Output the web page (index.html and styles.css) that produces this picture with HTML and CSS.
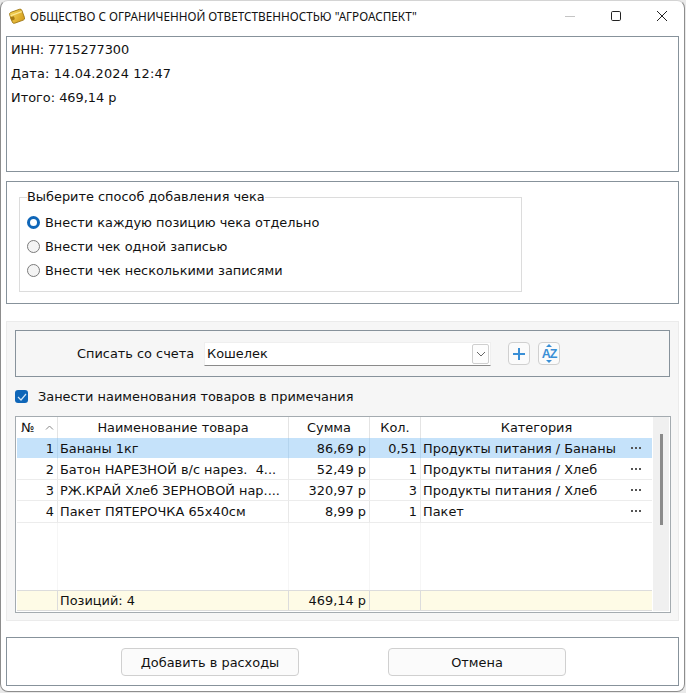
FILE: index.html
```html
<!DOCTYPE html>
<html>
  <head>
    <meta charset="utf-8">
    <title>Чек</title>
    <link rel="stylesheet" href="styles.css">
  </head>
  <body>
    <svg width="0" height="0" class="defs">
      <symbol id="more" viewBox="0 0 10 2">
        <rect x="0" width="2" height="2" fill="#555"/>
        <rect x="4" width="2" height="2" fill="#555"/>
        <rect x="8" width="2" height="2" fill="#555"/>
      </symbol>
    </svg>
    <div class="window">
      <div class="titlebar">
        <svg class="app-icon" width="18" height="18" viewBox="0 0 18 18">
          <defs>
            <linearGradient id="gold" x1="0" y1="0" x2="1" y2="1">
              <stop offset="0" stop-color="#f7d65a"/>
              <stop offset="1" stop-color="#d29a18"/>
            </linearGradient>
          </defs>
          <g transform="rotate(-20 9 9)">
            <rect x="2.5" y="3.5" width="13" height="11.5" rx="2" fill="url(#gold)" stroke="#9c7412" stroke-width="0.8"/>
            <path d="M3 6.5H15" stroke="#fbe997" stroke-width="1.2"/>
            <rect x="2" y="8" width="4" height="3.5" rx="1" fill="#a67a14"/>
          </g>
        </svg>
        <span class="title">ОБЩЕСТВО С ОГРАНИЧЕННОЙ ОТВЕТСТВЕННОСТЬЮ "АГРОАСПЕКТ"</span>
        <div class="controls">
          <span class="ctl">
            <svg width="12" height="12" viewBox="0 0 12 12"><path d="M1 6.5H11" stroke="#c4c4c4" stroke-width="1"/></svg>
          </span>
          <span class="ctl">
            <svg width="12" height="12" viewBox="0 0 12 12"><rect x="1.5" y="1.5" width="9" height="9" rx="1.2" fill="none" stroke="#222" stroke-width="1"/></svg>
          </span>
          <span class="ctl">
            <svg width="12" height="12" viewBox="0 0 12 12"><path d="M1 1L11 11M11 1L1 11" stroke="#222" stroke-width="1"/></svg>
          </span>
        </div>
      </div>

      <div class="panel info">
        <p>ИНН: 7715277300</p>
        <p>Дата: 14.04.2024 12:47</p>
        <p>Итого: 469,14 р</p>
      </div>

      <div class="panel mode">
        <fieldset class="group">
          <legend>Выберите способ добавления чека</legend>
          <div class="radio"><span class="dot on"></span>Внести каждую позицию чека отдельно</div>
          <div class="radio"><span class="dot"></span>Внести чек одной записью</div>
          <div class="radio"><span class="dot"></span>Внести чек несколькими записями</div>
        </fieldset>
      </div>

      <div class="sheet">
        <div class="account">
          <span class="account-label">Списать со счета</span>
          <div class="combo">
            <span>Кошелек</span>
            <span class="combo-arrow">
              <svg width="10" height="6" viewBox="0 0 10 6"><path d="M1 1L5 5L9 1" fill="none" stroke="#666" stroke-width="1"/></svg>
            </span>
          </div>
          <span class="tool">
            <svg width="12" height="12" viewBox="0 0 12 12"><path d="M6 0V12M0 6H12" stroke="#3a8fd6" stroke-width="2"/></svg>
          </span>
          <span class="tool az">
            <svg class="az-up" width="6" height="3" viewBox="0 0 6 3"><path d="M0 3L3 0L6 3Z" fill="#3a8fd6"/></svg>
            <b>AZ</b>
            <svg class="az-down" width="6" height="3" viewBox="0 0 6 3"><path d="M0 0L3 3L6 0Z" fill="#3a8fd6"/></svg>
          </span>
        </div>

        <div class="check-row">
          <span class="check">
            <svg width="10" height="8" viewBox="0 0 10 8"><path d="M1 4L4 7L9 1" fill="none" stroke="#cfe4f7" stroke-width="1.2"/></svg>
          </span>
          Занести наименования товаров в примечания
        </div>

        <div class="grid-box">
          <table class="items">
            <colgroup>
              <col class="c-num"><col class="c-name"><col class="c-sum"><col class="c-qty"><col class="c-cat">
            </colgroup>
            <thead>
              <tr>
                <th class="th-num">№<svg width="9" height="5" viewBox="0 0 9 5"><path d="M1 4.5L4.5 1L8 4.5" fill="none" stroke="#888" stroke-width="1"/></svg></th>
                <th>Наименование товара</th><th>Сумма</th><th>Кол.</th><th>Категория</th>
              </tr>
            </thead>
            <tbody>
              <tr class="sel">
                <td class="r">1</td><td>Бананы 1кг</td><td class="r">86,69 р</td><td class="r">0,51</td>
                <td><div class="cat">Продукты питания / Бананы<svg class="more"><use href="#more"/></svg></div></td>
              </tr>
              <tr>
                <td class="r">2</td><td>Батон НАРЕЗНОЙ в/с нарез.&nbsp; 4...</td><td class="r">52,49 р</td><td class="r">1</td>
                <td><div class="cat">Продукты питания / Хлеб<svg class="more"><use href="#more"/></svg></div></td>
              </tr>
              <tr>
                <td class="r">3</td><td>РЖ.КРАЙ Хлеб ЗЕРНОВОЙ нар....</td><td class="r">320,97 р</td><td class="r">3</td>
                <td><div class="cat">Продукты питания / Хлеб<svg class="more"><use href="#more"/></svg></div></td>
              </tr>
              <tr>
                <td class="r">4</td><td>Пакет ПЯТЕРОЧКА 65x40см</td><td class="r">8,99 р</td><td class="r">1</td>
                <td><div class="cat">Пакет<svg class="more"><use href="#more"/></svg></div></td>
              </tr>
              <tr class="filler"><td></td><td></td><td></td><td></td><td></td></tr>
            </tbody>
            <tfoot>
              <tr>
                <td></td><td>Позиций: 4</td><td class="r">469,14 р</td><td></td><td></td>
              </tr>
            </tfoot>
          </table>
          <div class="scroll"><div class="thumb"></div></div>
        </div>
      </div>

      <div class="panel footer">
        <button class="btn">Добавить в расходы</button>
        <button class="btn">Отмена</button>
      </div>
    </div>
  </body>
</html>
```

FILE: styles.css
```css
html, body {
  margin: 0;
  height: 100%;
  background: #e9e9e9;
}
body {
  font-family: "DejaVu Sans", sans-serif;
  font-size: 12.9px;
  color: #111;
}
.defs {
  display: block;
}
.window {
  box-sizing: border-box;
  width: 685px;
  height: 692px;
  padding: 0 5px;
  background: #fff;
  border: 1px solid #8d8d8d;
  border-top-color: #d4d4d4;
  border-radius: 8px;
}
.titlebar {
  display: flex;
  align-items: center;
  height: 30px;
  margin: 0 -6px 5px -1px;
}
.app-icon {
  margin-left: 3px;
}
.title {
  margin: -1px 0 0 4px;
  font-family: "Noto Sans", sans-serif;
  font-size: 11.75px;
  white-space: nowrap;
}
.controls {
  display: flex;
  margin-left: auto;
}
.ctl {
  display: flex;
  align-items: center;
  justify-content: center;
  width: 46px;
  height: 30px;
}
.panel {
  box-sizing: border-box;
  border: 1px solid #87929b;
  background: #fff;
}
.info {
  height: 136px;
  padding: 4px;
  margin-bottom: 9px;
}
.info p {
  margin: 0;
  height: 24px;
  line-height: 18px;
}
.info p:nth-child(1) {
  letter-spacing: -0.1px;
}
.info p:nth-child(2) {
  letter-spacing: 0.15px;
}
.mode {
  height: 123px;
  padding: 6px 12px;
  margin-bottom: 17px;
}
.group {
  box-sizing: border-box;
  width: 503px;
  height: 102px;
  margin: 2px 0 0;
  padding: 6px 7px 0;
  border: 1px solid #dcdcdc;
}
.group legend {
  padding: 0;
  line-height: 14px;
}
.radio {
  display: flex;
  align-items: center;
  height: 24px;
}
.dot {
  box-sizing: border-box;
  width: 13px;
  height: 13px;
  margin-right: 5px;
  border: 1px solid #7b7b7b;
  border-radius: 50%;
  background: #f4f4f4;
}
.dot.on {
  border: 3.5px solid #0f66b8;
  background: #fff;
}
.sheet {
  box-sizing: border-box;
  height: 300px;
  padding: 8px;
  margin-bottom: 16px;
  background: #f6f6f6;
  border: 1px solid #ebebeb;
}
.account {
  box-sizing: border-box;
  display: flex;
  align-items: center;
  height: 47px;
  padding-left: 61px;
  border: 1px solid #87929b;
}
.account-label {
  width: 127px;
}
.combo {
  box-sizing: border-box;
  display: flex;
  align-items: center;
  justify-content: space-between;
  width: 287px;
  height: 24px;
  padding: 0 1px 0 2px;
  margin-right: 17px;
  background: #fff;
  border: 1px solid #efefef;
  border-bottom: 1px solid #8a8a8a;
}
.combo-arrow {
  box-sizing: border-box;
  display: flex;
  align-items: center;
  justify-content: center;
  width: 17px;
  height: 20px;
  background: #fdfdfd;
  border: 1px solid #cfcfcf;
  border-radius: 2px;
}
.tool {
  box-sizing: border-box;
  display: flex;
  align-items: center;
  justify-content: center;
  width: 22px;
  height: 23px;
  margin-right: 8px;
  background: #fbfbfb;
  border: 1px solid #d0d0d0;
  border-radius: 4px;
}
.az {
  position: relative;
}
.az b {
  font-family: "Liberation Sans", sans-serif;
  font-size: 12.5px;
  letter-spacing: -1px;
  color: #3a8fd6;
}
.az-up,
.az-down {
  position: absolute;
  left: 7px;
}
.az-up {
  top: 1px;
}
.az-down {
  bottom: 1px;
}
.check-row {
  display: flex;
  align-items: center;
  height: 39px;
}
.check {
  display: flex;
  align-items: center;
  justify-content: center;
  width: 13px;
  height: 13px;
  margin-right: 10px;
  background: #0f66b8;
  border-radius: 3px;
}
.grid-box {
  box-sizing: border-box;
  display: flex;
  justify-content: space-between;
  width: 656px;
  height: 197px;
  padding: 0 1px 1px;
  background: #fff;
  border: 1px solid #a4abb0;
}
.items {
  table-layout: fixed;
  border-collapse: separate;
  border-spacing: 0;
  width: 635px;
  height: 194px;
}
.c-num { width: 41px; }
.c-name { width: 231px; }
.c-sum { width: 81px; }
.c-qty { width: 51px; }
.items th {
  box-sizing: border-box;
  height: 21px;
  padding: 0 0 1px;
  font-weight: normal;
  border-right: 1px solid #e4e4e4;
}
.items .th-num {
  padding-left: 1px;
}
.items th:last-child,
.items td:last-child {
  border-right: 0;
}
.th-num svg {
  margin-left: 10px;
  vertical-align: 2px;
}
.items td {
  box-sizing: border-box;
  height: 21px;
  padding: 0 3px 0 2px;
  white-space: nowrap;
  overflow: hidden;
  border-right: 1px solid #e8e8e8;
  border-bottom: 1px solid #ececec;
}
.items .r {
  text-align: right;
}
.items .sel td {
  background: #c5e2fa;
  border-right-color: #b4d4ee;
  border-bottom-color: #fff;
}
.cat {
  display: flex;
  align-items: center;
  justify-content: space-between;
  padding-right: 8px;
}
.more {
  width: 10px;
  height: 2px;
}
.items .filler td {
  height: 67px;
  border-bottom: 0;
  border-right-color: #f6f6f6;
}
.items tfoot td {
  height: 21px;
  background: #fefbe6;
  border-top: 1px solid #dcdcdc;
  border-bottom: 1px solid #dcdcdc;
  border-right: 1px solid #dcdcdc;
}
.scroll {
  width: 16px;
  background: #f0f0f0;
}
.thumb {
  width: 3px;
  height: 91px;
  margin: 17px 0 0 7px;
  background: #8a8a8a;
}
.footer {
  display: flex;
  height: 49px;
  padding: 1px 0 0 114px;
  gap: 89px;
  align-items: center;
}
.btn {
  width: 178px;
  height: 28px;
  padding: 0;
  font: inherit;
  color: #111;
  background: #fbfbfb;
  border: 1px solid #d0d0d0;
  border-radius: 4px;
}
```
